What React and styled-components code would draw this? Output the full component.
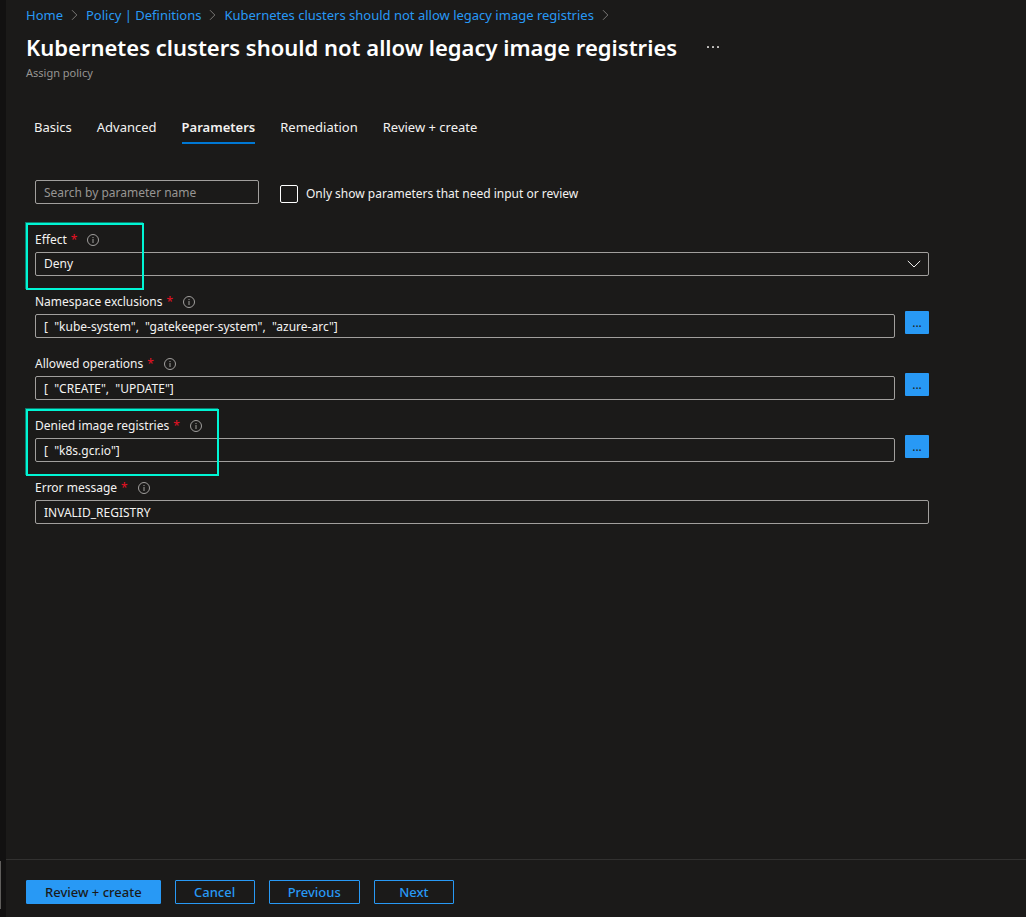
import React, { useState } from "react";
import styled, { createGlobalStyle, css } from "styled-components";

const GlobalStyle = createGlobalStyle`
  *, *::before, *::after { box-sizing: border-box; }
  body {
    margin: 0;
    background: #1b1a19;
    color: #f3f2f1;
    font-family: "Noto Sans", "Open Sans", sans-serif;
    font-size: 13px;
    line-height: 20px;
  }
  button, input, select { font: inherit; color: inherit; }
`;

const Shell = styled.div`
  display: flex;
  min-height: 100vh;
`;

const Rail = styled.div`
  display: flex;
  flex-direction: column;
  justify-content: flex-end;
  width: 6px;
  padding-bottom: 8px;
  background: #121111;
`;

const RailThumb = styled.div`
  width: 1px;
  height: 48px;
  background: #605e5c;
`;

const Blade = styled.div`
  display: flex;
  flex: 1;
  flex-direction: column;
  min-width: 0;
`;

const Header = styled.header`
  padding: 5px 20px 0;
`;

const Breadcrumb = styled.nav`
  display: flex;
  align-items: center;
  gap: 8px;
`;

const CrumbLink = styled.a`
  color: #2899f5;
  text-decoration: none;
  white-space: nowrap;
`;

const TitleRow = styled.div`
  display: flex;
  align-items: center;
  gap: 30px;
  margin: 6px 0 2px;
`;

const Title = styled.h1`
  margin: 0;
  font-size: 22px;
  font-weight: 600;
  line-height: 32px;
  color: #ffffff;
`;

const MoreButton = styled.button`
  display: flex;
  padding: 0;
  border: 0;
  background: none;
`;

const Subtitle = styled.p`
  margin: 0;
  font-size: 11px;
  line-height: 16px;
  color: #979593;
`;

const Tabs = styled.div`
  display: flex;
  gap: 25px;
  padding: 36px 28px 0;
`;

const Tab = styled.button`
  padding: 0 0 5px;
  border: 0;
  border-bottom: 2px solid ${(p) => (p.$active ? "#0078d4" : "transparent")};
  background: none;
  font-weight: ${(p) => (p.$active ? 600 : 400)};
  white-space: nowrap;
`;

const Form = styled.main`
  flex: 1;
  padding: 36px 97px 40px 29px;
  font-size: 12px;
`;

const FilterRow = styled.div`
  display: flex;
  align-items: flex-start;
  gap: 21px;
  margin-bottom: 24px;
`;

const control = css`
  width: 100%;
  height: 24px;
  padding: 0 8px;
  border: 1px solid #a19f9d;
  border-radius: 2px;
  background: #1b1a19;
  outline-color: #2899f5;
`;

const TextInput = styled.input`
  ${control}
  &::placeholder { color: #979593; opacity: 1; }
`;

const SearchBox = styled.div`
  width: 224px;
`;

const CheckLabel = styled.label`
  display: flex;
  align-items: center;
  gap: 8px;
  padding-top: 4px;
`;

const Checkbox = styled.input`
  appearance: none;
  width: 18px;
  height: 18px;
  margin: 0;
  border: 1px solid #ffffff;
  border-radius: 2px;
  &:checked { background: #2899f5; }
`;

const Fields = styled.div`
  display: flex;
  flex-direction: column;
  gap: 14px;
`;

const Field = styled.div`
  position: relative;
`;

const LabelRow = styled.div`
  display: flex;
  align-items: center;
  height: 24px;
  gap: 10px;
`;

const Required = styled.span`
  margin-left: 4px;
  color: #e81123;
`;

const ControlRow = styled.div`
  display: flex;
  gap: 10px;
`;

const SelectWrap = styled.div`
  display: grid;
  width: 100%;
  align-items: center;
  > * { grid-area: 1 / 1; }
  > svg { justify-self: end; margin-right: 8px; pointer-events: none; }
`;

const Select = styled.select`
  ${control}
  appearance: none;
`;

const EditButton = styled.button`
  flex: none;
  width: 24px;
  height: 23px;
  margin-top: -3px;
  padding: 0;
  border: 0;
  border-radius: 1px;
  background: #2899f5;
  color: #1b1a19;
`;

const Highlight = styled.div`
  position: absolute;
  top: -5px;
  left: -9px;
  width: ${(p) => p.$width}px;
  height: 67px;
  border: 2px solid #00f5d4;
  box-shadow: -1px -1px 0 #0b7c6d;
  pointer-events: none;
`;

const Footer = styled.footer`
  display: flex;
  gap: 14px;
  padding: 20px 20px 13px;
  border-top: 1px solid #323130;
`;

const Action = styled.button`
  min-width: 80px;
  height: 24px;
  padding: 0 18px;
  border: 1px solid #2899f5;
  border-radius: 1px;
  background: ${(p) => (p.$primary ? "#2899f5" : "transparent")};
  color: ${(p) => (p.$primary ? "#1b1a19" : "#2899f5")};
  font-weight: 500;
  line-height: 20px;
  white-space: nowrap;
`;

const Chevron = () => (
  <svg width="7" height="12" viewBox="0 0 7 12" fill="none" stroke="#797775" aria-hidden="true">
    <path d="M1 1.2 5.8 6 1 10.8" />
  </svg>
);

const DownChevron = () => (
  <svg width="14" height="8" viewBox="0 0 14 8" fill="none" stroke="#f3f2f1" aria-hidden="true">
    <path d="M.8.9 7 7 13.2.9" />
  </svg>
);

const Dots = () => (
  <svg width="12" height="4" viewBox="0 0 12 4" fill="#c8c6c4" aria-hidden="true">
    <rect x="0" y="1" width="2" height="2" rx=".6" />
    <rect x="5" y="1" width="2" height="2" rx=".6" />
    <rect x="10" y="1" width="2" height="2" rx=".6" />
  </svg>
);

const InfoIcon = () => (
  <svg width="12" height="12" viewBox="0 0 12 12" fill="none" stroke="#a19f9d" aria-hidden="true">
    <circle cx="6" cy="6" r="5.5" />
    <path d="M6 5v4M6 3v1.1" />
  </svg>
);

const crumbs = [
  "Home",
  "Policy | Definitions",
  "Kubernetes clusters should not allow legacy image registries",
];

const tabs = ["Basics", "Advanced", "Parameters", "Remediation", "Review + create"];

const fields = [
  { id: "effect", label: "Effect", options: ["Deny", "Audit", "Disabled"], highlight: 118 },
  { id: "exclusions", label: "Namespace exclusions", value: '[  "kube-system",  "gatekeeper-system",  "azure-arc"]', editor: true },
  { id: "operations", label: "Allowed operations", value: '[  "CREATE",  "UPDATE"]', editor: true },
  { id: "registries", label: "Denied image registries", value: '[  "k8s.gcr.io"]', editor: true, highlight: 193 },
  { id: "error", label: "Error message", value: "INVALID_REGISTRY" },
];

function ParameterField({ field }) {
  return (
    <Field>
      <LabelRow>
        <label htmlFor={field.id}>
          {field.label}
          <Required>*</Required>
        </label>
        <InfoIcon />
      </LabelRow>
      <ControlRow>
        {field.options ? (
          <SelectWrap>
            <Select id={field.id}>
              {field.options.map((o) => (
                <option key={o}>{o}</option>
              ))}
            </Select>
            <DownChevron />
          </SelectWrap>
        ) : (
          <TextInput id={field.id} defaultValue={field.value} />
        )}
        {field.editor && <EditButton aria-label={`Edit ${field.label}`}>...</EditButton>}
      </ControlRow>
      {field.highlight && <Highlight $width={field.highlight} />}
    </Field>
  );
}

export default function App() {
  const [active, setActive] = useState("Parameters");
  return (
    <Shell>
      <GlobalStyle />
      <Rail>
        <RailThumb />
      </Rail>
      <Blade>
        <Header>
          <Breadcrumb aria-label="Breadcrumb">
            {crumbs.map((c) => (
              <React.Fragment key={c}>
                <CrumbLink href="#">{c}</CrumbLink>
                <Chevron />
              </React.Fragment>
            ))}
          </Breadcrumb>
          <TitleRow>
            <Title>Kubernetes clusters should not allow legacy image registries</Title>
            <MoreButton aria-label="More actions">
              <Dots />
            </MoreButton>
          </TitleRow>
          <Subtitle>Assign policy</Subtitle>
        </Header>
        <Tabs role="tablist">
          {tabs.map((t) => (
            <Tab key={t} role="tab" aria-selected={t === active} $active={t === active} onClick={() => setActive(t)}>
              {t}
            </Tab>
          ))}
        </Tabs>
        <Form>
          <FilterRow>
            <SearchBox>
              <TextInput type="text" aria-label="Search by parameter name" placeholder="Search by parameter name" />
            </SearchBox>
            <CheckLabel>
              <Checkbox type="checkbox" />
              Only show parameters that need input or review
            </CheckLabel>
          </FilterRow>
          <Fields>
            {fields.map((f) => (
              <ParameterField key={f.id} field={f} />
            ))}
          </Fields>
        </Form>
        <Footer>
          <Action $primary>Review + create</Action>
          <Action>Cancel</Action>
          <Action>Previous</Action>
          <Action>Next</Action>
        </Footer>
      </Blade>
    </Shell>
  );
}
